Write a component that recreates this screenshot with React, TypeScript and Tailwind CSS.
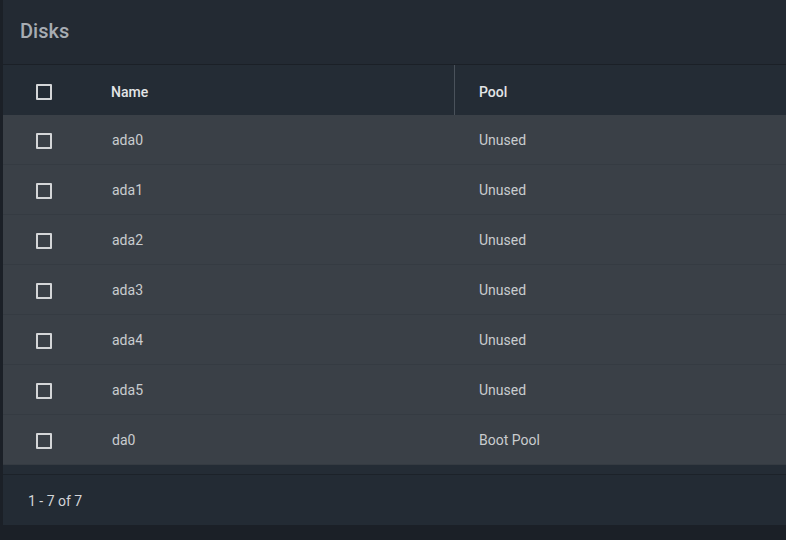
const disks = [
  { name: "ada0", pool: "Unused" },
  { name: "ada1", pool: "Unused" },
  { name: "ada2", pool: "Unused" },
  { name: "ada3", pool: "Unused" },
  { name: "ada4", pool: "Unused" },
  { name: "ada5", pool: "Unused" },
  { name: "da0", pool: "Boot Pool" },
];

const Box = () => (
  <div className="w-[16px] h-[16px] border-2 border-[#d4d6d8] rounded-[1px]" />
);

export default function App() {
  return (
    <div className="w-[786px] h-[540px] bg-[#1b2027] pl-[3px] overflow-hidden font-['Roboto',sans-serif]">
      <div className="bg-[#232a33]">
        {/* title */}
        <div className="h-[65px] flex items-center pb-[2px] px-[17px] border-b border-[#1b2027]">
          <h2 className="text-[20px] font-medium text-[#a8adb3]">Disks</h2>
        </div>

        {/* header */}
        <div className="h-[50px] flex items-center pt-[4px] bg-[#242c35] text-[14px] font-medium text-[#e3e5e7]">
          <div className="w-[81px] flex justify-center pl-[1px]">
            <Box />
          </div>
          <div className="w-[370px] pl-[27px]">Name</div>
          <div className="self-stretch -mt-[4px] w-px bg-[#4a525b]" />
          <div className="pl-[24px]">Pool</div>
        </div>

        {/* rows */}
        {disks.map((d) => (
          <div
            key={d.name}
            className="h-[50px] flex items-center pt-[2px] bg-[#3a4047] border-b border-[#353b42] text-[14px] text-[#c9cccf]"
          >
            <div className="w-[81px] flex justify-center pl-[1px]">
              <Box />
            </div>
            <div className="w-[371px] pl-[28px]">{d.name}</div>
            <div className="pl-[24px]">{d.pool}</div>
          </div>
        ))}

        <div className="h-[10px] bg-[#242c35] border-b border-[#1c2229]" />

        {/* footer */}
        <div className="h-[50px] flex items-center pt-[3px] pl-[25px] text-[14px] text-[#d3d5d8] bg-[#232b34]">
          1 - 7 of 7
        </div>
      </div>
    </div>
  );
}
